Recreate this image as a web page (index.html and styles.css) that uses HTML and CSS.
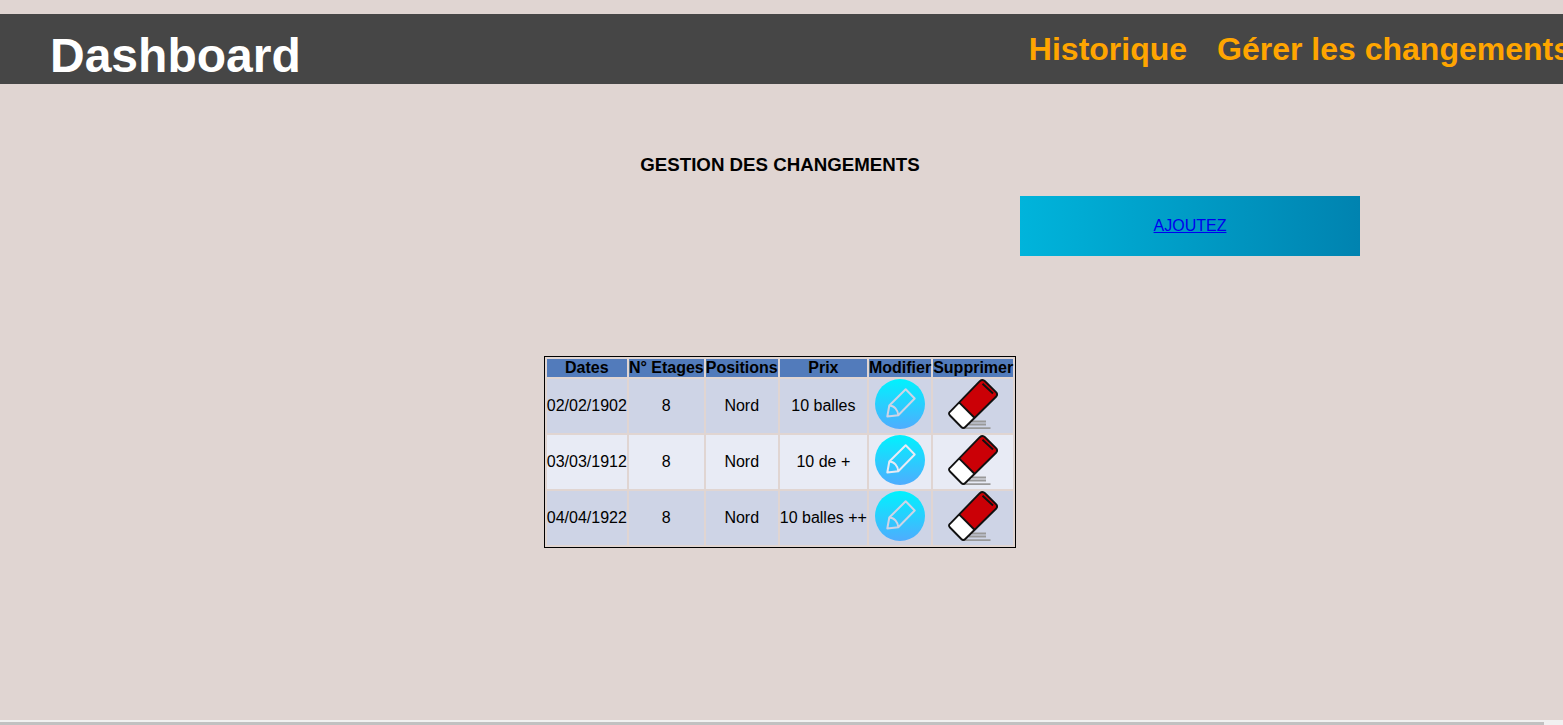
FILE: index.html
```html
<!DOCTYPE html>
<html lang="fr">
<head>
<meta charset="utf-8">
<title>Dashboard</title>
<link rel="stylesheet" href="styles.css">
</head>
<body>
<svg class="defs" aria-hidden="true">
  <defs>
    <linearGradient id="sky" x1="0" y1="0" x2="0" y2="1">
      <stop offset="0" stop-color="#00f2fe"/>
      <stop offset="1" stop-color="#4facfe"/>
    </linearGradient>
    <symbol id="pencil" viewBox="0 0 50 50">
      <circle cx="25" cy="25" r="25" fill="url(#sky)"/>
      <path d="M30.700 10.300 39.700 19.500 23.300 36.300 12.300 37.500 14.300 26.500ZM14.300 26.500C19 26.500 23 31 23.300 36.300" fill="none" stroke="currentColor" stroke-width="2" stroke-linejoin="round"/>
    </symbol>
    <symbol id="eraser" viewBox="0 0 50 50">
      <path d="M24 42.500H38M21 45.500H38M16 49.100H42.500" stroke="#999" stroke-width="1.800"/>
      <path d="M11.300 23.600 26.200 38.500 17.300 48Q15.300 49.900 13.300 48L2 36.500Q0 34.500 2 32.800Z" fill="#fff"/>
      <path d="M11.300 23.600 31.800 2.200Q34.500 -.2 37 2.200L48 13.200Q50.200 15.500 48 17.800L26.200 38.500Z" fill="#cb0006"/>
      <path d="M31.800 2.200Q34.500 -.2 37 2.200L48 13.200Q50.200 15.500 48 17.800L17.300 48Q15.300 49.900 13.300 48L2 36.500Q0 34.500 2 32.800ZM11.300 23.600 26.200 38.500M34.500 4.800 45 14.500" fill="none" stroke="#111" stroke-width="1.900"/>
    </symbol>
  </defs>
</svg>
<header class="topbar">
  <h1 class="brand">Dashboard</h1>
  <nav class="menu">
    <a href="#historique">Historique</a>
    <a href="#changements">Gérer les changements</a>
  </nav>
</header>
<main class="content">
  <h3 class="title">GESTION DES CHANGEMENTS</h3>
  <div class="actions"><a class="add" href="#ajouter">AJOUTEZ</a></div>
  <table class="changes">
    <thead>
      <tr><th>Dates</th><th>N° Etages</th><th>Positions</th><th>Prix</th><th>Modifier</th><th>Supprimer</th></tr>
    </thead>
    <tbody>
      <tr>
        <td>02/02/1902</td><td>8</td><td>Nord</td><td>10 balles</td>
        <td><a href="#modifier-1" aria-label="Modifier"><svg class="icon"><use href="#pencil"/></svg></a></td>
        <td><a href="#supprimer-1" aria-label="Supprimer"><svg class="icon"><use href="#eraser"/></svg></a></td>
      </tr>
      <tr>
        <td>03/03/1912</td><td>8</td><td>Nord</td><td>10 de +</td>
        <td><a href="#modifier-2" aria-label="Modifier"><svg class="icon"><use href="#pencil"/></svg></a></td>
        <td><a href="#supprimer-2" aria-label="Supprimer"><svg class="icon"><use href="#eraser"/></svg></a></td>
      </tr>
      <tr>
        <td>04/04/1922</td><td>8</td><td>Nord</td><td>10 balles ++</td>
        <td><a href="#modifier-3" aria-label="Modifier"><svg class="icon"><use href="#pencil"/></svg></a></td>
        <td><a href="#supprimer-3" aria-label="Supprimer"><svg class="icon"><use href="#eraser"/></svg></a></td>
      </tr>
    </tbody>
  </table>
</main>
<div class="scrollbar" aria-hidden="true"><div class="thumb"></div></div>
</body>
</html>
```
FILE: styles.css
```css
* {
  box-sizing: border-box;
}

body {
  display: flex;
  flex-direction: column;
  min-height: 100vh;
  margin: 0;
  padding-top: 14px;
  overflow-x: hidden;
  background: #e0d5d2;
  color: #000;
  font-family: "Liberation Sans", Arial, sans-serif;
  font-size: 16px;
}

.defs {
  position: absolute;
  width: 0;
  height: 0;
}

.topbar {
  display: flex;
  justify-content: space-between;
  align-items: flex-start;
  height: 70px;
  padding: 14px 0 0 50px;
  overflow: hidden;
  background: #464646;
}

.brand {
  margin: 0;
  color: #fff;
  font-size: 48px;
  line-height: 56px;
}

.menu {
  display: flex;
  gap: 30px;
  margin-right: -8px;
}

.menu a {
  color: orange;
  font-size: 32px;
  font-weight: bold;
  line-height: 42px;
  text-decoration: none;
  white-space: nowrap;
}

.content {
  flex: 1;
  padding: 70px 3px 0 0;
}

.title {
  margin: 0;
  line-height: 22px;
  text-align: center;
}

.actions {
  display: flex;
  justify-content: flex-end;
  margin: 20px 200px 100px 0;
}

.add {
  width: 340px;
  background: linear-gradient(to right, #00b4db, #0083b0);
  color: #00e;
  line-height: 60px;
  text-align: center;
}

.changes {
  margin: 0 auto;
  border: 1px solid #000;
  border-spacing: 2px;
  text-align: center;
}

.changes th,
.changes td {
  padding: 0;
}

.changes th {
  background: #527bbb;
  line-height: 18px;
}

.changes td {
  height: 54px;
  background: #ced4e6;
  color: #000;
}

.changes tr:nth-child(even) td {
  background: #e8ebf5;
}

.changes a {
  display: block;
  height: 54px;
  color: #ced4e6;
}

.changes tr:nth-child(even) a {
  color: #e8ebf5;
}

.icon {
  width: 50px;
  height: 50px;
}

.scrollbar {
  padding-top: 2px;
  background: #f1f1f1;
}

.thumb {
  width: calc(100% - 19px);
  height: 3px;
  background: #c1c1c1;
}
```
